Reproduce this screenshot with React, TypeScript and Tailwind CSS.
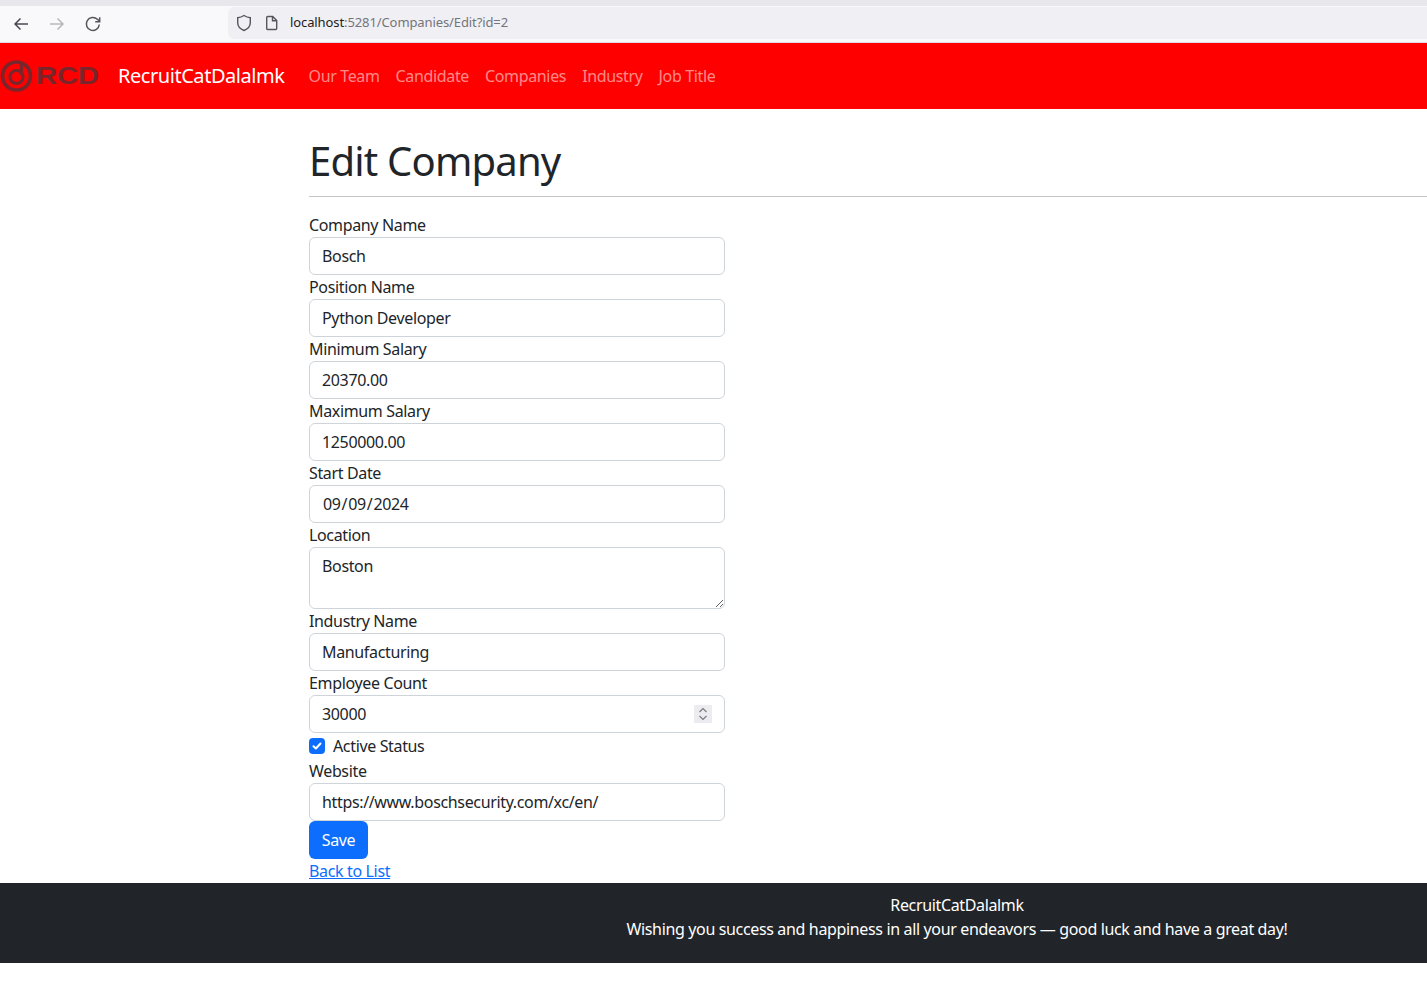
import React from "react";

const font = { fontFamily: '"Noto Sans", "Liberation Sans", sans-serif' };
const inputCls =
  "block w-[416px] h-[38px] rounded-[6px] border border-[#ced4da] bg-white px-3 text-[16px] text-[#212529] outline-none tracking-[-0.35px]";
const labelCls = "block h-6 leading-6 text-[16px] text-[#212529] tracking-[-0.35px]";

function Field({ label, value }: { label: string; value: string }) {
  return (
    <div>
      <label className={labelCls}>{label}</label>
      <input readOnly className={inputCls} value={value} />
    </div>
  );
}

function Logo() {
  return (
    <svg width="100" height="34" viewBox="0 0 100 34" className="shrink-0">
      <g fill="none" stroke="#78262c">
        <circle cx="16.5" cy="17" r="14" strokeWidth="3.6" />
        <circle cx="16.5" cy="18" r="6.5" strokeWidth="3.2" />
        <path d="M21.5 3v13" strokeWidth="3.2" />
      </g>
      <text x="36" y="25" fill="#78262c" fontSize="23" fontWeight="700" textLength="63" lengthAdjust="spacingAndGlyphs" fontFamily="'Liberation Sans', sans-serif">RCD</text>
    </svg>
  );
}

export default function App() {
  return (
    <div className="min-h-[981px] bg-white overflow-hidden" style={font}>
      {/* browser chrome */}
      <div className="h-[43px] bg-[#f9f9fb] flex flex-col">
        <div className="h-[6px] bg-[#e8e8ec] shrink-0" />
        <div className="flex items-center h-[37px] border-b border-[#dcdce0]">
          <div className="flex items-center w-[228px] shrink-0">
            <svg width="18" height="18" viewBox="0 0 18 18" className="ml-3" fill="none" stroke="#4a4a52" strokeWidth="1.5">
              <path d="M16 9H3M8.5 3.5 3 9l5.500 5.500" />
            </svg>
            <svg width="18" height="18" viewBox="0 0 18 18" className="ml-[18px]" fill="none" stroke="#b8b8be" strokeWidth="1.5">
              <path d="M2 9h13M9.500 3.500 15 9l-5.500 5.500" />
            </svg>
            <svg width="18" height="18" viewBox="0 0 18 18" className="ml-[18px]" fill="none" stroke="#55555c" strokeWidth="1.500">
              <path d="M15.300 9.500A6.500 6.500 0 1 1 13.400 4.300L15.500 6.400" />
              <path d="M15.700 2.200v4.500h-4.500" />
            </svg>
          </div>
          <div className="flex-1 h-8 -mt-[2px] rounded-l-[6px] bg-[#f0f0f4] flex items-center">
            <svg width="16" height="18" viewBox="0 0 16 18" className="ml-2" fill="none" stroke="#55555c" strokeWidth="1.400">
              <path d="M8 1.500c2 1.300 4 2 6.300 2.200v5c0 3.700-2.700 6.300-6.300 7.800-3.600-1.500-6.300-4.100-6.300-7.800v-5C4 3.500 6 2.800 8 1.500Z" />
            </svg>
            <svg width="13" height="16" viewBox="0 0 13 16" className="ml-[13px]" fill="none" stroke="#55555c" strokeWidth="1.400">
              <path d="M2.700 1.500h5l4 4v8c0 .6-.4 1-1 1H2.700c-.6 0-1-.4-1-1v-11c0-.6.4-1 1-1Z" />
              <path d="M7.500 1.500v4.200h4.200" />
            </svg>
            <span className="ml-[12px] text-[13px] tracking-[-0.1px] text-[#74747c]">
              <span className="text-[#1c1c22]">localhost</span>:5281/Companies/Edit?id=2
            </span>
          </div>
        </div>
      </div>

      {/* navbar */}
      <nav className="h-[66px] bg-[#ff0000] flex items-center">
        <Logo />
        <a className="ml-[18px] text-[20px] text-white tracking-[-0.45px]">RecruitCatDalalmk</a>
        <ul className="ml-4 flex text-[16px] text-[#ffffff8c] tracking-[-0.35px]">
          <li className="px-2">Our Team</li>
          <li className="px-2">Candidate</li>
          <li className="px-2">Companies</li>
          <li className="px-2">Industry</li>
          <li className="px-2">Job Title</li>
        </ul>
      </nav>

      {/* main */}
      <main className="pl-[309px]">
        <h1 className="h-[88px] pt-[24px] leading-[56px] text-[40px] text-[#212529] tracking-[-0.8px] border-b border-[#c4c5c6]">
          Edit Company
        </h1>
        <form className="pt-4">
          <Field label="Company Name" value="Bosch" />
          <Field label="Position Name" value="Python Developer" />
          <Field label="Minimum Salary" value="20370.00" />
          <Field label="Maximum Salary" value="1250000.00" />
          <div>
            <label className={labelCls}>Start Date</label>
            <input readOnly type="date" className={inputCls} value="2024-09-09" />
          </div>
          <div>
            <label className={labelCls}>Location</label>
            <textarea
              readOnly
              className="block w-[416px] h-[62px] rounded-[6px] border border-[#ced4da] bg-white px-3 py-[6px] text-[16px] leading-6 text-[#212529] outline-none tracking-[-0.35px]"
              value="Boston"
            />
          </div>
          <Field label="Industry Name" value="Manufacturing" />
          <div>
            <label className={labelCls}>Employee Count</label>
            <div className="relative w-[416px]">
              <input readOnly className={inputCls} value="30000" />
              <div className="absolute right-[13px] top-[10px] w-[18px] h-[18px] bg-[#ececf0] flex items-center justify-center">
                <svg width="10" height="14" viewBox="0 0 10 14" fill="none" stroke="#7a7a80" strokeWidth="1.200">
                  <path d="M1.500 5 5 1.500 8.500 5M1.500 9 5 12.500 8.500 9" />
                </svg>
              </div>
            </div>
          </div>
          <div className="h-[26px] flex items-center">
            <span className="w-4 h-4 rounded-[4px] bg-[#0d6efd] flex items-center justify-center">
              <svg width="12" height="12" viewBox="0 0 12 12" fill="none" stroke="white" strokeWidth="2" strokeLinecap="round" strokeLinejoin="round">
                <path d="m2.500 6.200 2.400 2.300 4.600-5" />
              </svg>
            </span>
            <label className="ml-2 text-[16px] text-[#212529] tracking-[-0.35px]">Active Status</label>
          </div>
          <Field label="Website" value="https://www.boschsecurity.com/xc/en/" />
          <button type="button" className="block h-[38px] w-[59px] rounded-[6px] bg-[#0d6efd] text-white text-[16px] tracking-[-0.35px]">
            Save
          </button>
        </form>
        <a className="block h-6 leading-6 text-[16px] text-[#0d6efd] underline tracking-[-0.35px]">Back to List</a>
      </main>

      {/* footer */}
      <footer className="h-20 bg-[#212529] pl-[487px] pt-[10px] text-center text-white text-[16px] leading-6 tracking-[-0.35px]">
        <div>RecruitCatDalalmk</div>
        <div>Wishing you success and happiness in all your endeavors — good luck and have a great day!</div>
      </footer>
    </div>
  );
}
